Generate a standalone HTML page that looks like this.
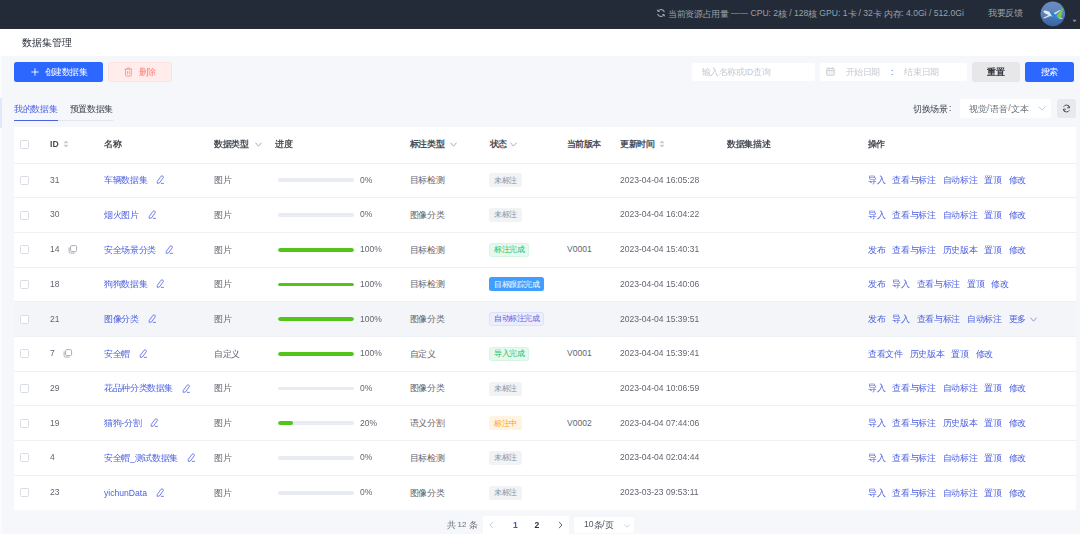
<!DOCTYPE html>
<html><head><meta charset="utf-8">
<style>
* { box-sizing:border-box; margin:0; padding:0; }
html,body { width:1080px; height:534px; overflow:hidden; background:#f5f7fb; font-family:"Liberation Sans", sans-serif; }
b.n { font-weight:normal; display:inline-block; font-size:9.8px; transform:scaleX(0.87); transform-origin:0 50%; position:relative; top:-1.1px; }
i.k { font-style:normal; position:relative; top:0.9px; letter-spacing:-0.36px; }
.abs { position:absolute; white-space:nowrap; }
#top { position:absolute; left:0; top:0; width:1080px; height:28.7px; background:#222b37; }
#top .info { position:absolute; left:668px; top:7.8px; font-size:8.6px; line-height:10px; color:#9ba1a9; white-space:nowrap; }
#title { position:absolute; left:0; top:28.7px; width:1080px; height:27px; background:#fff; }
#title i.k { letter-spacing:0; }
#title span { position:absolute; left:21.5px; top:7.3px; font-size:9.8px; line-height:12px; color:#2a2f38; }
.btn { position:absolute; top:62px; height:20px; border-radius:2.5px; font-size:8.6px; line-height:19px; white-space:nowrap; }
.inp { position:absolute; top:62.5px; height:18.5px; background:#fff; border-radius:2px; font-size:8.6px; line-height:18.5px; color:#c4c8cf; white-space:nowrap; }
#tabs { position:absolute; left:14px; top:101px; font-size:8.6px; line-height:14px; white-space:nowrap; }
#table { position:absolute; left:14px; top:127px; width:1062px; height:382.5px; background:#fff; }
.row, .hdr { position:absolute; left:0; width:1062px; height:34.7px; border-top:1px solid #edf0f5; }
.hdr { top:0; height:35.5px; border-top:none; }
.row.hover { background:#f4f5f9; }
.c { position:absolute; top:0; height:100%; display:flex; align-items:center; font-size:8.6px; color:#62666e; white-space:nowrap; }
.hdr .c { color:#474c55; font-weight:600; top:-0.8px; }
.link { color:#4b5fe0; }
.ops .op { color:#4b5fe0; margin-right:7.1px; display:inline-flex; align-items:center; }
.ed { display:inline-flex; margin-left:9px; color:#5d68e6; position:relative; top:-0.5px; }
.cb { position:absolute; top:50%; margin-top:-4.5px; width:9px; height:9px; border:1px solid #d9dce2; border-radius:1.5px; background:#fff; }
.ci { position:absolute; top:50%; margin-top:-4.5px; height:9px; display:flex; }
.bar { position:absolute; top:50%; margin-top:-1.9px; width:76.3px; height:3.8px; border-radius:2px; background:#e8ebf2; overflow:hidden; }
.fill { display:block; height:100%; background:#52c41a; border-radius:2px; }
.tag { position:absolute; top:50%; margin-top:-7px; height:14px; padding:0 5px; border-radius:2.5px; font-size:7.5px; line-height:14px; white-space:nowrap; }
.tag i.k { top:0.3px; letter-spacing:-0.5px; }
.tg-gray { background:#f2f3f5; color:#8a8f99; }
.tg-green { background:#e6f9ee; color:#22bf62; border:1px solid #d8f4e3; line-height:12px; padding:0 4px; }
.tg-blue { background:#409eff; color:#fff; }
.tg-purple { background:#eceeff; color:#5b63d9; border:1px solid #dde1fb; line-height:12px; padding:0 4px; }
.tg-orange { background:#fff4e0; color:#ff9b2f; }
.sort { margin-left:4px; }
#wrap { position:absolute; left:0; top:0; width:1080px; height:534px; filter:blur(0.4px); }
</style></head><body><div id="wrap">
<div id="top">
  <svg width="10" height="10" viewBox="0 0 10 10" style="position:absolute;left:656.3px;top:7.6px"><path d="M8.4 4.2 A3.5 3.5 0 0 0 2.2 3" fill="none" stroke="#9ba1a9" stroke-width="1.1"/><path d="M1.6 5.8 A3.5 3.5 0 0 0 7.8 7" fill="none" stroke="#9ba1a9" stroke-width="1.1"/><path d="M1.3 1.6 L1.9 3.6 L3.9 3.2" fill="none" stroke="#9ba1a9" stroke-width="1"/><path d="M8.7 8.4 L8.1 6.4 L6.1 6.8" fill="none" stroke="#9ba1a9" stroke-width="1"/></svg>
  <div class="info"><i class="k">当前资源占用量</i> —— CPU: 2<i class="k">核</i> / 128<i class="k">核</i> GPU: 1<i class="k">卡</i> / 32<i class="k">卡</i> <i class="k">内存</i>: 4.0Gi / 512.0Gi</div>
  <div class="abs" style="left:988px;top:7.4px;font-size:8.6px;line-height:10px;color:#9ba1a9"><i class="k">我要反馈</i></div>
  <svg width="26" height="26" viewBox="0 0 26 26" style="position:absolute;left:1040.3px;top:0.5px">
<defs><linearGradient id="av" x1="0" y1="0" x2="0" y2="1"><stop offset="0" stop-color="#6a8cc0"/><stop offset="0.55" stop-color="#5c82bb"/><stop offset="0.7" stop-color="#4670ae"/><stop offset="1" stop-color="#3a64a6"/></linearGradient></defs>
<circle cx="12.8" cy="12.85" r="12.3" fill="url(#av)"/>
<path d="M2.8 16.9 L9.5 13.6 L11 14.8 L4.5 17.6 Z" fill="#d5dfea"/>
<path d="M3.4 10.2 Q4 9.4 5.2 9.6 L11.2 11.2 L12.6 14.6 L11.6 15.4 L5 12.2 Q3.4 11.4 3.4 10.2 Z" fill="#e8eef5"/>
<path d="M13.6 12.3 L19.8 9 L20.4 9.8 L15 13.4 Z" fill="#dfe7f0"/>
<path d="M9.2 10.6 L11.8 10.9 L19.2 16.6 L18.8 18.3 L16.6 18 L12 15.2 Z" fill="#2f87d4"/>
<path d="M16.6 15 L22.6 6.2 Q23 9 22 12.4 L21 16.6 L18.4 17.2 Z" fill="#7ac943"/>
<path d="M19.5 16.6 L22.8 16.9 L22.4 17.8 L19.2 17.7 Z" fill="#dfe7f0"/>
</svg>
  <svg width="5" height="4" viewBox="0 0 5 4" style="position:absolute;left:1071.5px;top:18.5px"><path d="M0.5 0.8 L2.5 3.2 L4.5 0.8 Z" fill="#8a9099"/></svg>
</div>
<div class="abs" style="left:0;top:55.7px;width:1.8px;height:480px;background:#fafbfd"></div>
<div class="abs" style="left:0;top:98px;width:1.8px;height:30.3px;background:#e2e7fb"></div>
<div id="title"><span><i class="k">数据集管理</i></span></div>
<div class="btn" style="left:14px;width:89px;background:#2c67ff;color:#fff;padding-left:30.5px"><i class="k">创建数据集</i></div>
<svg width="8" height="8" viewBox="0 0 8 8" style="position:absolute;left:31px;top:68px"><path d="M4 0.3 V7.7 M0.3 4 H7.7" stroke="#fff" stroke-width="0.9"/></svg>
<div class="btn" style="left:108px;width:63.5px;background:#ffeceb;border:1px solid #fde2df;color:#f9857c;padding-left:29.5px;line-height:17px;"><i class="k">删除</i></div>
<svg width="9" height="10" viewBox="0 0 9 10" style="position:absolute;left:123.8px;top:66.8px"><path d="M0.6 2.2 H8.2 M3.1 2.2 V1 H5.7 V2.2" fill="none" stroke="#f9958d" stroke-width="0.9"/><path d="M1.5 2.2 V8.3 Q1.5 9.1 2.3 9.1 H6.5 Q7.3 9.1 7.3 8.3 V2.2" fill="none" stroke="#f9958d" stroke-width="0.9"/><path d="M3.5 4 V7.3 M5.3 4 V7.3" stroke="#f9958d" stroke-width="0.8"/></svg>
<div class="inp" style="left:692px;width:122.5px;padding-left:9.5px"><i class="k">输入名称或</i>ID<i class="k">查询</i></div>
<div class="inp" style="left:820px;width:146.5px;padding-left:25.5px"><i class="k">开始日期</i><span style="display:inline-block;width:11px"></span><span style="color:#5c616b">:</span><span style="display:inline-block;width:11px"></span><i class="k">结束日期</i></div>
<svg width="9" height="9" viewBox="0 0 9 9" style="position:absolute;left:826px;top:67px"><rect x="0.7" y="1.3" width="7.6" height="7" rx="1" fill="#f1f2f5" stroke="#c9cdd4" stroke-width="0.9"/><path d="M0.7 3.6 H8.3 M2.6 0.3 V2 M6.4 0.3 V2" stroke="#c9cdd4" stroke-width="0.9"/></svg>
<div class="btn" style="left:972px;width:48px;background:#e7e7ea;color:#30343b;text-align:center;font-weight:600"><i class="k">重置</i></div>
<div class="btn" style="left:1025px;width:49px;background:#2c67ff;color:#fff;text-align:center"><i class="k">搜索</i></div>
<div id="tabs"><span style="color:#4b5fe0"><i class="k">我的数据集</i></span><span style="color:#3a3f48;margin-left:12.5px"><i class="k">预置数据集</i></span></div>
<div class="abs" style="left:14px;top:120px;width:98.5px;height:1px;background:#e3e5ea"></div>
<div class="abs" style="left:14px;top:119.5px;width:44px;height:1.6px;background:#4b63e6"></div>
<div class="abs" style="left:913px;top:101px;font-size:8.6px;line-height:14px;color:#3a3f48"><i class="k">切换场景</i><span style="margin-left:1.5px">:</span></div>
<div class="inp" style="left:960px;top:99px;width:91px;height:19px;line-height:19px;padding-left:9px;color:#6b7079"><i class="k">视觉</i><span style="margin:0 0.75px">/</span><i class="k">语音</i><span style="margin:0 0.75px">/</span><i class="k">文本</i></div>
<svg width="8" height="5" viewBox="0 0 8 5" style="position:absolute;left:1037.5px;top:106px"><path d="M0.6 0.7 L4 4 L7.4 0.7" fill="none" stroke="#c4c8cf" stroke-width="0.9"/></svg>
<div class="abs" style="left:1057px;top:99px;width:19px;height:19px;background:#e8e9ed;border-radius:2.5px"></div>
<svg width="9" height="9" viewBox="0 0 9 9" style="position:absolute;left:1062px;top:104px"><path d="M7.6 3.6 A3.2 3.2 0 0 0 1.6 2.8" fill="none" stroke="#4e5460" stroke-width="1"/><path d="M1.4 5.4 A3.2 3.2 0 0 0 7.4 6.2" fill="none" stroke="#4e5460" stroke-width="1"/><path d="M6.4 1.2 L7.7 3.8 L5.1 3.8" fill="none" stroke="#4e5460" stroke-width="1"/><path d="M2.6 7.8 L1.3 5.2 L3.9 5.2" fill="none" stroke="#4e5460" stroke-width="1"/></svg>
<div id="table">
<div class="hdr">
  <span class="cb" style="left:6px;top:calc(50% - 0.4px)"></span>
  <span class="c" style="left:36px">ID<svg class="sort" width="6" height="8" viewBox="0 0 6 8"><path d="M0.4 3.2 L3 0.4 L5.6 3.2 Z M0.4 4.8 L3 7.6 L5.6 4.8 Z" fill="#c6cad2"/></svg></span>
  <span class="c" style="left:90px"><i class="k">名称</i></span>
  <span class="c" style="left:200px"><i class="k">数据类型</i><svg class="chev" style="margin-left:6px;position:relative;top:0.6px" width="7" height="5" viewBox="0 0 7 5"><path d="M0.4 0.6 L3.5 4.2 L6.6 0.6" fill="none" stroke="#9aa0aa" stroke-width="0.85"/></svg></span>
  <span class="c" style="left:261px"><i class="k">进度</i></span>
  <span class="c" style="left:395.6px"><i class="k">标注类型</i><svg class="chev" style="margin-left:6px;position:relative;top:0.6px" width="7" height="5" viewBox="0 0 7 5"><path d="M0.4 0.6 L3.5 4.2 L6.6 0.6" fill="none" stroke="#9aa0aa" stroke-width="0.85"/></svg></span>
  <span class="c" style="left:475.6px"><i class="k">状态</i><svg class="chev" style="margin-left:3.5px;position:relative;top:0.6px" width="7" height="5" viewBox="0 0 7 5"><path d="M0.4 0.6 L3.5 4.2 L6.6 0.6" fill="none" stroke="#9aa0aa" stroke-width="0.85"/></svg></span>
  <span class="c" style="left:552.5px"><i class="k">当前版本</i></span>
  <span class="c" style="left:606px"><i class="k">更新时间</i><svg class="sort" width="6" height="8" viewBox="0 0 6 8"><path d="M0.4 3.2 L3 0.4 L5.6 3.2 Z M0.4 4.8 L3 7.6 L5.6 4.8 Z" fill="#c6cad2"/></svg></span>
  <span class="c" style="left:713px"><i class="k">数据集描述</i></span>
  <span class="c" style="left:853.5px"><i class="k">操作</i></span>
</div>
<div class="row" style="top:35.50px">
<span class="cb" style="left:6px"></span>
<span class="c" style="left:36px"><b class="n">31</b></span>
<span class="c link" style="left:90px"><i class="k">车辆数据集</i><span class="ed"><svg class="edit" width="9" height="9" viewBox="0 0 9 9"><path d="M1.2 8.3 L1.2 6.5 L5.1 1.2 Q5.9 0.5 6.8 1.1 L7.2 1.5 Q7.7 2.1 7.2 2.8 L3.3 8.1 Z" fill="none" stroke="currentColor" stroke-width="0.85" stroke-linejoin="round"/><path d="M4.9 8.35 H7.9" stroke="currentColor" stroke-width="0.85" /></svg></span></span>
<span class="c" style="left:200px"><i class="k">图片</i></span>
<span class="bar" style="left:263.6px"><span class="fill" style="width:0%"></span></span>
<span class="c" style="left:346px"><b class="n">0%</b></span>
<span class="c" style="left:395.6px"><i class="k">目标检测</i></span>
<span class="tag tg-gray" style="left:475px"><i class="k">未标注</i></span>
<span class="c" style="left:606px"><b class="n">2023-04-04 16:05:28</b></span>
<span class="c ops" style="left:854px"><span class="op"><i class="k">导入</i></span><span class="op"><i class="k">查看与标注</i></span><span class="op"><i class="k">自动标注</i></span><span class="op"><i class="k">置顶</i></span><span class="op"><i class="k">修改</i></span></span>
</div>
<div class="row" style="top:70.20px">
<span class="cb" style="left:6px"></span>
<span class="c" style="left:36px"><b class="n">30</b></span>
<span class="c link" style="left:90px"><i class="k">烟火图片</i><span class="ed"><svg class="edit" width="9" height="9" viewBox="0 0 9 9"><path d="M1.2 8.3 L1.2 6.5 L5.1 1.2 Q5.9 0.5 6.8 1.1 L7.2 1.5 Q7.7 2.1 7.2 2.8 L3.3 8.1 Z" fill="none" stroke="currentColor" stroke-width="0.85" stroke-linejoin="round"/><path d="M4.9 8.35 H7.9" stroke="currentColor" stroke-width="0.85" /></svg></span></span>
<span class="c" style="left:200px"><i class="k">图片</i></span>
<span class="bar" style="left:263.6px"><span class="fill" style="width:0%"></span></span>
<span class="c" style="left:346px"><b class="n">0%</b></span>
<span class="c" style="left:395.6px"><i class="k">图像分类</i></span>
<span class="tag tg-gray" style="left:475px"><i class="k">未标注</i></span>
<span class="c" style="left:606px"><b class="n">2023-04-04 16:04:22</b></span>
<span class="c ops" style="left:854px"><span class="op"><i class="k">导入</i></span><span class="op"><i class="k">查看与标注</i></span><span class="op"><i class="k">自动标注</i></span><span class="op"><i class="k">置顶</i></span><span class="op"><i class="k">修改</i></span></span>
</div>
<div class="row" style="top:104.90px">
<span class="cb" style="left:6px"></span>
<span class="c" style="left:36px"><b class="n">14</b></span>
<span class="ci" style="left:54px"><svg class="copy" width="10" height="9" viewBox="0 0 10 9"><rect x="2.6" y="0.6" width="6" height="6" rx="1.2" fill="none" stroke="#a9aeb8" stroke-width="1"/><path d="M1.1 2.4 V6.8 Q1.1 8.1 2.4 8.1 H6.6" fill="none" stroke="#a9aeb8" stroke-width="1"/></svg></span>
<span class="c link" style="left:90px"><i class="k">安全场景分类</i><span class="ed"><svg class="edit" width="9" height="9" viewBox="0 0 9 9"><path d="M1.2 8.3 L1.2 6.5 L5.1 1.2 Q5.9 0.5 6.8 1.1 L7.2 1.5 Q7.7 2.1 7.2 2.8 L3.3 8.1 Z" fill="none" stroke="currentColor" stroke-width="0.85" stroke-linejoin="round"/><path d="M4.9 8.35 H7.9" stroke="currentColor" stroke-width="0.85" /></svg></span></span>
<span class="c" style="left:200px"><i class="k">图片</i></span>
<span class="bar" style="left:263.6px"><span class="fill" style="width:100%"></span></span>
<span class="c" style="left:346px"><b class="n">100%</b></span>
<span class="c" style="left:395.6px"><i class="k">目标检测</i></span>
<span class="tag tg-green" style="left:475px"><i class="k">标注完成</i></span>
<span class="c" style="left:552.5px"><b class="n">V0001</b></span>
<span class="c" style="left:606px"><b class="n">2023-04-04 15:40:31</b></span>
<span class="c ops" style="left:854px"><span class="op"><i class="k">发布</i></span><span class="op"><i class="k">查看与标注</i></span><span class="op"><i class="k">历史版本</i></span><span class="op"><i class="k">置顶</i></span><span class="op"><i class="k">修改</i></span></span>
</div>
<div class="row" style="top:139.60px">
<span class="cb" style="left:6px"></span>
<span class="c" style="left:36px"><b class="n">18</b></span>
<span class="c link" style="left:90px"><i class="k">狗狗数据集</i><span class="ed"><svg class="edit" width="9" height="9" viewBox="0 0 9 9"><path d="M1.2 8.3 L1.2 6.5 L5.1 1.2 Q5.9 0.5 6.8 1.1 L7.2 1.5 Q7.7 2.1 7.2 2.8 L3.3 8.1 Z" fill="none" stroke="currentColor" stroke-width="0.85" stroke-linejoin="round"/><path d="M4.9 8.35 H7.9" stroke="currentColor" stroke-width="0.85" /></svg></span></span>
<span class="c" style="left:200px"><i class="k">图片</i></span>
<span class="bar" style="left:263.6px"><span class="fill" style="width:100%"></span></span>
<span class="c" style="left:346px"><b class="n">100%</b></span>
<span class="c" style="left:395.6px"><i class="k">目标检测</i></span>
<span class="tag tg-blue" style="left:475px"><i class="k">目标跟踪完成</i></span>
<span class="c" style="left:606px"><b class="n">2023-04-04 15:40:06</b></span>
<span class="c ops" style="left:854px"><span class="op"><i class="k">发布</i></span><span class="op"><i class="k">导入</i></span><span class="op"><i class="k">查看与标注</i></span><span class="op"><i class="k">置顶</i></span><span class="op"><i class="k">修改</i></span></span>
</div>
<div class="row hover" style="top:174.30px">
<span class="cb" style="left:6px"></span>
<span class="c" style="left:36px"><b class="n">21</b></span>
<span class="c link" style="left:90px"><i class="k">图像分类</i><span class="ed"><svg class="edit" width="9" height="9" viewBox="0 0 9 9"><path d="M1.2 8.3 L1.2 6.5 L5.1 1.2 Q5.9 0.5 6.8 1.1 L7.2 1.5 Q7.7 2.1 7.2 2.8 L3.3 8.1 Z" fill="none" stroke="currentColor" stroke-width="0.85" stroke-linejoin="round"/><path d="M4.9 8.35 H7.9" stroke="currentColor" stroke-width="0.85" /></svg></span></span>
<span class="c" style="left:200px"><i class="k">图片</i></span>
<span class="bar" style="left:263.6px"><span class="fill" style="width:100%"></span></span>
<span class="c" style="left:346px"><b class="n">100%</b></span>
<span class="c" style="left:395.6px"><i class="k">图像分类</i></span>
<span class="tag tg-purple" style="left:475px"><i class="k">自动标注完成</i></span>
<span class="c" style="left:606px"><b class="n">2023-04-04 15:39:51</b></span>
<span class="c ops" style="left:854px"><span class="op"><i class="k">发布</i></span><span class="op"><i class="k">导入</i></span><span class="op"><i class="k">查看与标注</i></span><span class="op"><i class="k">自动标注</i></span><span class="op"><i class="k">更多</i><svg class="chev" style="margin-left:4px;position:relative;top:0.6px" width="7" height="5" viewBox="0 0 7 5"><path d="M0.4 0.6 L3.5 4.2 L6.6 0.6" fill="none" stroke="#7d88e8" stroke-width="0.85"/></svg></span></span>
</div>
<div class="row" style="top:209.00px">
<span class="cb" style="left:6px"></span>
<span class="c" style="left:36px"><b class="n">7</b></span>
<span class="ci" style="left:49px"><svg class="copy" width="10" height="9" viewBox="0 0 10 9"><rect x="2.6" y="0.6" width="6" height="6" rx="1.2" fill="none" stroke="#a9aeb8" stroke-width="1"/><path d="M1.1 2.4 V6.8 Q1.1 8.1 2.4 8.1 H6.6" fill="none" stroke="#a9aeb8" stroke-width="1"/></svg></span>
<span class="c link" style="left:90px"><i class="k">安全帽</i><span class="ed"><svg class="edit" width="9" height="9" viewBox="0 0 9 9"><path d="M1.2 8.3 L1.2 6.5 L5.1 1.2 Q5.9 0.5 6.8 1.1 L7.2 1.5 Q7.7 2.1 7.2 2.8 L3.3 8.1 Z" fill="none" stroke="currentColor" stroke-width="0.85" stroke-linejoin="round"/><path d="M4.9 8.35 H7.9" stroke="currentColor" stroke-width="0.85" /></svg></span></span>
<span class="c" style="left:200px"><i class="k">自定义</i></span>
<span class="bar" style="left:263.6px"><span class="fill" style="width:100%"></span></span>
<span class="c" style="left:346px"><b class="n">100%</b></span>
<span class="c" style="left:395.6px"><i class="k">自定义</i></span>
<span class="tag tg-green" style="left:475px"><i class="k">导入完成</i></span>
<span class="c" style="left:552.5px"><b class="n">V0001</b></span>
<span class="c" style="left:606px"><b class="n">2023-04-04 15:39:41</b></span>
<span class="c ops" style="left:854px"><span class="op"><i class="k">查看文件</i></span><span class="op"><i class="k">历史版本</i></span><span class="op"><i class="k">置顶</i></span><span class="op"><i class="k">修改</i></span></span>
</div>
<div class="row" style="top:243.70px">
<span class="cb" style="left:6px"></span>
<span class="c" style="left:36px"><b class="n">29</b></span>
<span class="c link" style="left:90px"><i class="k">花品种分类数据集</i><span class="ed"><svg class="edit" width="9" height="9" viewBox="0 0 9 9"><path d="M1.2 8.3 L1.2 6.5 L5.1 1.2 Q5.9 0.5 6.8 1.1 L7.2 1.5 Q7.7 2.1 7.2 2.8 L3.3 8.1 Z" fill="none" stroke="currentColor" stroke-width="0.85" stroke-linejoin="round"/><path d="M4.9 8.35 H7.9" stroke="currentColor" stroke-width="0.85" /></svg></span></span>
<span class="c" style="left:200px"><i class="k">图片</i></span>
<span class="bar" style="left:263.6px"><span class="fill" style="width:0%"></span></span>
<span class="c" style="left:346px"><b class="n">0%</b></span>
<span class="c" style="left:395.6px"><i class="k">图像分类</i></span>
<span class="tag tg-gray" style="left:475px"><i class="k">未标注</i></span>
<span class="c" style="left:606px"><b class="n">2023-04-04 10:06:59</b></span>
<span class="c ops" style="left:854px"><span class="op"><i class="k">导入</i></span><span class="op"><i class="k">查看与标注</i></span><span class="op"><i class="k">自动标注</i></span><span class="op"><i class="k">置顶</i></span><span class="op"><i class="k">修改</i></span></span>
</div>
<div class="row" style="top:278.40px">
<span class="cb" style="left:6px"></span>
<span class="c" style="left:36px"><b class="n">19</b></span>
<span class="c link" style="left:90px"><i class="k">猫狗</i>-<i class="k">分割</i><span class="ed"><svg class="edit" width="9" height="9" viewBox="0 0 9 9"><path d="M1.2 8.3 L1.2 6.5 L5.1 1.2 Q5.9 0.5 6.8 1.1 L7.2 1.5 Q7.7 2.1 7.2 2.8 L3.3 8.1 Z" fill="none" stroke="currentColor" stroke-width="0.85" stroke-linejoin="round"/><path d="M4.9 8.35 H7.9" stroke="currentColor" stroke-width="0.85" /></svg></span></span>
<span class="c" style="left:200px"><i class="k">图片</i></span>
<span class="bar" style="left:263.6px"><span class="fill" style="width:20%"></span></span>
<span class="c" style="left:346px"><b class="n">20%</b></span>
<span class="c" style="left:395.6px"><i class="k">语义分割</i></span>
<span class="tag tg-orange" style="left:475px"><i class="k">标注中</i></span>
<span class="c" style="left:552.5px"><b class="n">V0002</b></span>
<span class="c" style="left:606px"><b class="n">2023-04-04 07:44:06</b></span>
<span class="c ops" style="left:854px"><span class="op"><i class="k">导入</i></span><span class="op"><i class="k">查看与标注</i></span><span class="op"><i class="k">历史版本</i></span><span class="op"><i class="k">置顶</i></span><span class="op"><i class="k">修改</i></span></span>
</div>
<div class="row" style="top:313.10px">
<span class="cb" style="left:6px"></span>
<span class="c" style="left:36px"><b class="n">4</b></span>
<span class="c link" style="left:90px"><i class="k">安全帽</i>_<i class="k">测试数据集</i><span class="ed"><svg class="edit" width="9" height="9" viewBox="0 0 9 9"><path d="M1.2 8.3 L1.2 6.5 L5.1 1.2 Q5.9 0.5 6.8 1.1 L7.2 1.5 Q7.7 2.1 7.2 2.8 L3.3 8.1 Z" fill="none" stroke="currentColor" stroke-width="0.85" stroke-linejoin="round"/><path d="M4.9 8.35 H7.9" stroke="currentColor" stroke-width="0.85" /></svg></span></span>
<span class="c" style="left:200px"><i class="k">图片</i></span>
<span class="bar" style="left:263.6px"><span class="fill" style="width:0%"></span></span>
<span class="c" style="left:346px"><b class="n">0%</b></span>
<span class="c" style="left:395.6px"><i class="k">目标检测</i></span>
<span class="tag tg-gray" style="left:475px"><i class="k">未标注</i></span>
<span class="c" style="left:606px"><b class="n">2023-04-04 02:04:44</b></span>
<span class="c ops" style="left:854px"><span class="op"><i class="k">导入</i></span><span class="op"><i class="k">查看与标注</i></span><span class="op"><i class="k">自动标注</i></span><span class="op"><i class="k">置顶</i></span><span class="op"><i class="k">修改</i></span></span>
</div>
<div class="row" style="top:347.80px">
<span class="cb" style="left:6px"></span>
<span class="c" style="left:36px"><b class="n">23</b></span>
<span class="c link" style="left:90px">yichunData<span class="ed"><svg class="edit" width="9" height="9" viewBox="0 0 9 9"><path d="M1.2 8.3 L1.2 6.5 L5.1 1.2 Q5.9 0.5 6.8 1.1 L7.2 1.5 Q7.7 2.1 7.2 2.8 L3.3 8.1 Z" fill="none" stroke="currentColor" stroke-width="0.85" stroke-linejoin="round"/><path d="M4.9 8.35 H7.9" stroke="currentColor" stroke-width="0.85" /></svg></span></span>
<span class="c" style="left:200px"><i class="k">图片</i></span>
<span class="bar" style="left:263.6px"><span class="fill" style="width:0%"></span></span>
<span class="c" style="left:346px"><b class="n">0%</b></span>
<span class="c" style="left:395.6px"><i class="k">图像分类</i></span>
<span class="tag tg-gray" style="left:475px"><i class="k">未标注</i></span>
<span class="c" style="left:606px"><b class="n">2023-03-23 09:53:11</b></span>
<span class="c ops" style="left:854px"><span class="op"><i class="k">导入</i></span><span class="op"><i class="k">查看与标注</i></span><span class="op"><i class="k">自动标注</i></span><span class="op"><i class="k">置顶</i></span><span class="op"><i class="k">修改</i></span></span>
</div>
</div>
<div class="abs" style="left:446.5px;top:518px;font-size:8.6px;line-height:12px;color:#6b7079"><i class="k">共</i><span style="margin-left:2.4px;font-size:8px">12</span><span style="margin-left:2.2px"></span><i class="k">条</i></div>
<div class="abs" style="left:482.5px;top:516px;width:86.5px;height:18px;background:#fff"></div>
<svg width="5" height="8" viewBox="0 0 5 8" style="position:absolute;left:488.5px;top:521px"><path d="M4 0.8 L1 4 L4 7.2" fill="none" stroke="#c4c8cf" stroke-width="0.9"/></svg>
<div class="abs" style="left:513px;top:519px;font-size:8.6px;line-height:12px;color:#3b54e0;font-weight:600">1</div>
<div class="abs" style="left:534.5px;top:519px;font-size:8.6px;line-height:12px;color:#2a2f38;font-weight:600">2</div>
<svg width="5" height="8" viewBox="0 0 5 8" style="position:absolute;left:558.3px;top:521px"><path d="M1 0.8 L4 4 L1 7.2" fill="none" stroke="#4e5460" stroke-width="0.9"/></svg>
<div class="abs" style="left:574px;top:516.7px;width:60px;height:16px;background:#fff;border-radius:2px"></div>
<div class="abs" style="left:584px;top:518px;font-size:8.6px;line-height:12px;color:#4e5460">10<i class="k">条</i>/<i class="k">页</i></div>
<svg width="6" height="4" viewBox="0 0 6 4" style="position:absolute;left:623.5px;top:523.5px"><path d="M0.5 0.6 L3 3.2 L5.5 0.6" fill="none" stroke="#c4c8cf" stroke-width="0.8"/></svg>
</div></body></html>
